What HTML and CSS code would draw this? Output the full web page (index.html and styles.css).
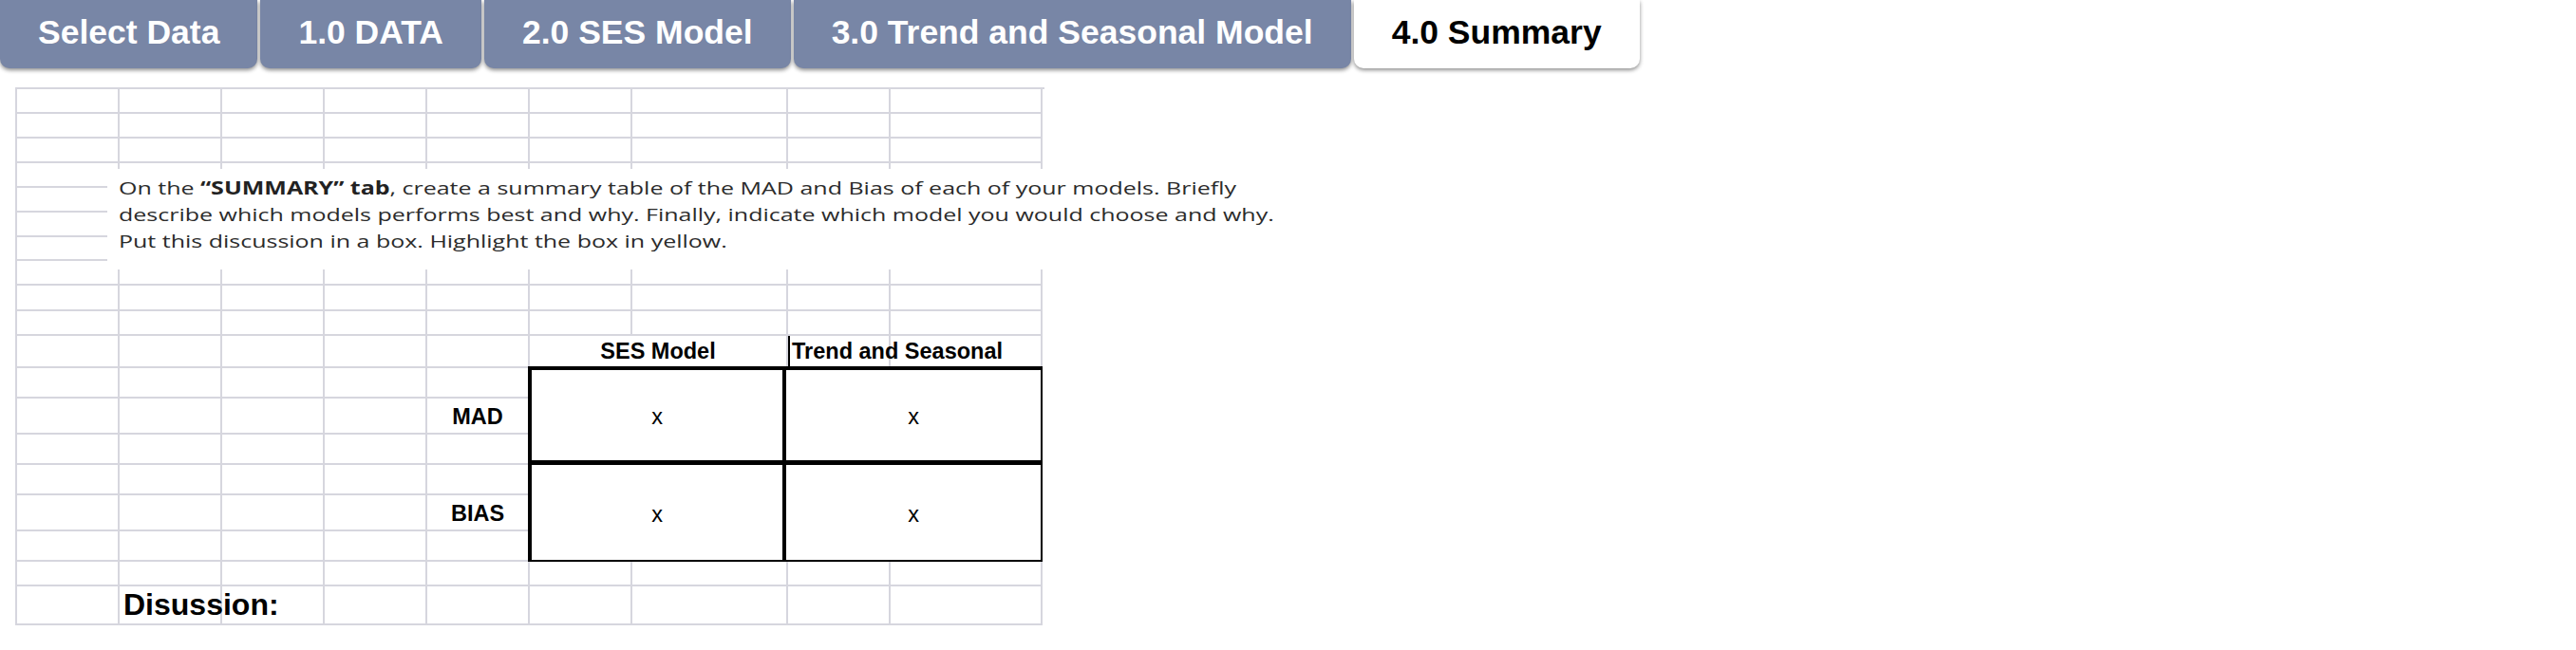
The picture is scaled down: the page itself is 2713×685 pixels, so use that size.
FILE: index.html
```html
<!DOCTYPE html>
<html lang="en">
<head>
<meta charset="utf-8">
<title>4.0 Summary</title>
<link rel="stylesheet" href="styles.css">
</head>
<body>
<nav class="tabs">
  <div class="tab">Select Data</div>
  <div class="tab">1.0 DATA</div>
  <div class="tab">2.0 SES Model</div>
  <div class="tab">3.0 Trend and Seasonal Model</div>
  <div class="tab tab-active">4.0 Summary</div>
</nav>

<section class="sheet">
  <div class="box">
    <div class="box-cell br-thick bb-thick">x</div>
    <div class="box-cell bb-thick">x</div>
    <div class="box-cell br-thick">x</div>
    <div class="box-cell">x</div>
  </div>

  <div class="c"></div><div class="c"></div><div class="c"></div><div class="c"></div><div class="c"></div><div class="c"></div><div class="c"></div><div class="c"></div><div class="c"></div>
  <div class="c"></div><div class="c"></div><div class="c"></div><div class="c"></div><div class="c"></div><div class="c"></div><div class="c"></div><div class="c"></div><div class="c"></div>
  <div class="c"></div><div class="c"></div><div class="c"></div><div class="c"></div><div class="c"></div><div class="c"></div><div class="c"></div><div class="c"></div><div class="c"></div>
  <div class="c"></div><div class="c"></div><div class="c"></div><div class="c"></div><div class="c"></div><div class="c"></div><div class="c"></div><div class="c"></div><div class="c"></div>
  <div class="c"></div><div class="c"></div><div class="c"></div><div class="c"></div><div class="c"></div><div class="c"></div><div class="c"></div><div class="c"></div><div class="c"></div>
  <div class="c"></div><div class="c"></div><div class="c"></div><div class="c"></div><div class="c"></div><div class="c"></div><div class="c"></div><div class="c"></div><div class="c"></div>
  <div class="c"></div><div class="c"></div><div class="c"></div><div class="c"></div><div class="c"></div><div class="c"></div><div class="c"></div><div class="c"></div><div class="c"></div>
  <div class="c"></div><div class="c"></div><div class="c"></div><div class="c"></div><div class="c"></div><div class="c"></div><div class="c"></div><div class="c"></div><div class="c"></div>
  <div class="c"></div><div class="c"></div><div class="c"></div><div class="c"></div><div class="c"></div><div class="c"></div><div class="c"></div><div class="c"></div><div class="c"></div>
  <div class="c"></div><div class="c"></div><div class="c"></div><div class="c"></div><div class="c"></div><div class="c"></div><div class="c"></div><div class="c"></div><div class="c"></div>

  <div class="c"></div><div class="c"></div><div class="c"></div><div class="c"></div><div class="c"></div>
  <div class="c head head-center span2">SES Model</div>
  <div class="c head head-left">Trend and Seasonal</div>
  <div class="c"></div>

  <div class="c"></div><div class="c"></div><div class="c"></div><div class="c"></div><div class="c"></div>
  <div class="c"></div><div class="c"></div><div class="c"></div><div class="c"></div><div class="c label">MAD</div>
  <div class="c"></div><div class="c"></div><div class="c"></div><div class="c"></div><div class="c"></div>
  <div class="c"></div><div class="c"></div><div class="c"></div><div class="c"></div><div class="c"></div>
  <div class="c"></div><div class="c"></div><div class="c"></div><div class="c"></div><div class="c label">BIAS</div>
  <div class="c"></div><div class="c"></div><div class="c"></div><div class="c"></div><div class="c"></div>

  <div class="c"></div><div class="c"></div><div class="c"></div><div class="c"></div><div class="c"></div><div class="c"></div><div class="c"></div><div class="c"></div><div class="c"></div>

  <div class="c"></div><div class="c discussion">Disussion:</div><div class="c"></div><div class="c"></div><div class="c"></div><div class="c"></div><div class="c"></div><div class="c"></div><div class="c"></div>

  <div class="note">
    <div class="note-text">
      <p>On the <b>“SUMMARY” tab</b>, create a summary table of the MAD and Bias of each of your models. Briefly</p>
      <p>describe which models performs best and why. Finally, indicate which model you would choose and why.</p>
      <p>Put this discussion in a box. Highlight the box in yellow.</p>
    </div>
  </div>
</section>
</body>
</html>
```

FILE: styles.css
```css
html, body {
  margin: 0;
  padding: 0;
  background: #ffffff;
}

body {
  font-family: "Liberation Sans", Arial, sans-serif;
  color: #000;
}

/* ---------- tabs ---------- */
.tabs {
  display: flex;
  gap: 3px;
  height: 72px;
}

.tab {
  display: flex;
  align-items: center;
  padding: 0 40px 3px;
  background: #7886a6;
  color: #ffffff;
  font-weight: bold;
  font-size: 35.5px;
  white-space: nowrap;
  border-radius: 0 0 10px 10px;
  box-shadow: 0 2px 4px rgba(0, 0, 0, 0.45);
}

.tab-active {
  background: #ffffff;
  color: #000000;
}

/* ---------- sheet ---------- */
.sheet {
  position: relative;
  margin: 20px 0 0 16px;
  width: 1082px;
  display: grid;
  grid-template-columns: 108px 108px 108px 108px 108px 108px 164px 108px 160px;
  grid-template-rows: 26px 26px 26px 26px 26px 26px 25px 26px 27px 26px 34px 32px 38px 32px 32px 38px 32px 26px 41px;
  border-left: 2px solid #d6d6de;
  border-top: 2px solid #d6d6de;
}

.c {
  border-right: 2px solid #d6d6de;
  border-bottom: 2px solid #d6d6de;
  display: flex;
  align-items: center;
  white-space: nowrap;
  min-width: 0;
}

.span2 {
  grid-column: span 2;
}

.head {
  font-weight: bold;
  font-size: 23.5px;
  padding-top: 1px;
}

.head-center {
  justify-content: center;
}

.head-left {
  position: relative;
  z-index: 1;
  padding-left: 4px;
  box-shadow: inset 2px 0 0 #000;
  overflow: visible;
}

.label {
  justify-content: center;
  font-weight: bold;
  font-size: 23.5px;
  padding-top: 3px;
}

.discussion {
  position: relative;
  z-index: 1;
  font-weight: bold;
  font-size: 32px;
  padding-left: 4px;
  overflow: visible;
}

/* ---------- summary box ---------- */
.box {
  grid-column: 6 / 10;
  grid-row: 12 / 18;
  margin: -2px 0 0 -2px;
  position: relative;
  z-index: 2;
  background: #ffffff;
  border-top: 4px solid #000;
  border-left: 4px solid #000;
  border-right: 2px solid #000;
  border-bottom: 2px solid #000;
  display: grid;
  grid-template-columns: 1fr 1fr;
  grid-template-rows: 1fr 1fr;
}

.box-cell {
  display: flex;
  align-items: center;
  justify-content: center;
  font-size: 23.5px;
  padding-top: 4px;
}

.br-thick {
  border-right: 4px solid #000;
}

.bb-thick {
  border-bottom: 5px solid #000;
}

/* ---------- pasted instruction note ---------- */
.note {
  position: absolute;
  left: 95px;
  top: 84px;
  width: 1262px;
  height: 106px;
  box-sizing: border-box;
  padding: 6px 0 0 12px;
  background: #ffffff;
  z-index: 3;
  font-family: "Open Sans", "Noto Sans", sans-serif;
  font-size: 19px;
  line-height: 28px;
  color: #2b2b2b;
}

.note-text {
  transform: scaleX(1.315);
  transform-origin: left top;
}

.note p {
  margin: 0;
  white-space: nowrap;
}

.note b {
  font-weight: bold;
  color: #222;
}
```
